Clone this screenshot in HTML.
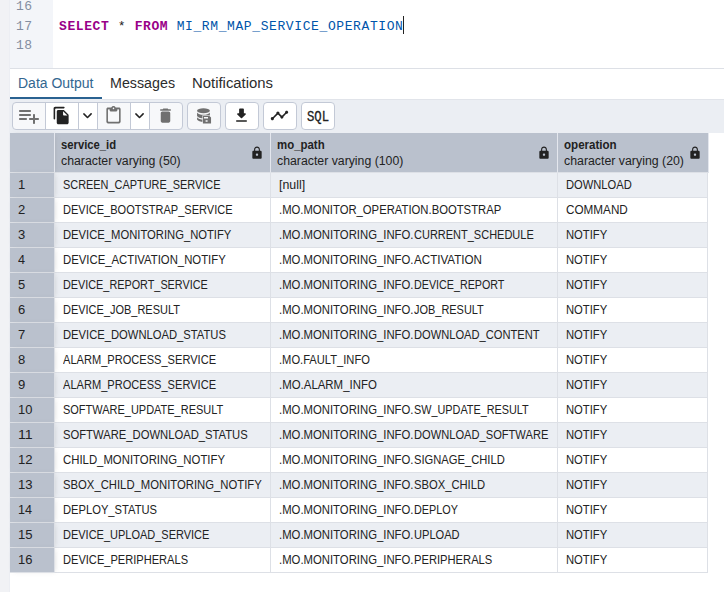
<!DOCTYPE html>
<html lang="en"><head><meta charset="utf-8"><title>Query</title>
<style>
*{box-sizing:border-box;margin:0;padding:0}
html,body{width:724px;height:592px;overflow:hidden;background:#fff}
body{position:relative;font-family:"Liberation Sans",sans-serif;color:#222;font-size:12px}
.abs{position:absolute}
.leftstrip{position:absolute;left:0;top:0;width:10px;height:592px;background:#f1f2f5;border-right:1px solid #eceef3}
.editor{position:absolute;left:10px;top:0;width:714px;height:68px;background:#fff}
.gutter{position:absolute;left:0;top:0;width:43px;height:68px;background:#f3f5f9}
.ln{position:absolute;left:0;width:43px;height:20px;font-family:"Liberation Mono",monospace;font-size:13px;letter-spacing:.6px;line-height:20px;color:#848ea0;padding-left:5.9px;white-space:pre}
.code{position:absolute;left:49px;top:16.6px;height:20px;font-family:"Liberation Mono",monospace;font-size:13px;letter-spacing:.6px;line-height:20px;white-space:pre;color:#222}
.kw{color:#990088;font-weight:bold}
.id{color:#0055aa}
.cursor{position:absolute;left:393px;top:16px;width:1px;height:18px;background:#222}
.edborder{position:absolute;left:10px;top:68px;width:714px;height:1px;background:#dde0e6}
.tabs{position:absolute;left:10px;top:69px;width:714px;height:30px;background:#fff}
.tab{position:absolute;top:0;height:30px;font-size:14px;line-height:16px;padding-top:5.5px;margin-left:-1px;white-space:nowrap;color:#2c2c2c}
.tab.active{color:#326690}
.tabline{position:absolute;left:0;top:28px;width:92px;height:2px;background:#2a6291}
.tbar{position:absolute;left:10px;top:99px;width:714px;height:34px;background:#ebeef3}
.tbline{position:absolute;left:102px;top:99px;width:622px;height:1px;background:#e1e4ea}
.btn{position:absolute;top:102px;height:28px;border:1px solid #c3c9d6;background:#fff}
.btn .ic{top:3px;width:19px;height:19px;left:50%;margin-left:-10px}
.sql{position:absolute;left:5.2px;top:5.5px;-webkit-text-stroke:.3px #222;font-family:"Liberation Mono",monospace;font-size:14px;line-height:16px;color:#222}
.btn.dis{background:#f7f8fa}
.btn svg{position:absolute;fill:#222}
.btn.dis svg{fill:#707070}
.grid{position:absolute;left:10px;top:133px;width:698px}
.hrow{height:40px;display:flex}
.hc{position:relative;height:40px;background:#bac1cd;border-right:1px solid #e4e7ee;border-bottom:1px solid #dde0e6;white-space:nowrap;overflow:hidden}
.c0{width:45px}.c1{width:216px}.c2{width:287px}.c3{width:150px}.hc.last{width:151px}
.grid{width:699px}
.hn{position:absolute;left:6px;top:4px;font-weight:bold;font-size:12px;line-height:16px}
.ht{position:absolute;left:6px;top:19.5px;font-size:12px;line-height:16px}
.lock{position:absolute;right:6px;top:13px;width:14px;height:14px;fill:#222}
.row{height:25px;display:flex}
.c{height:25px;border-right:1px solid #dde0e6;border-bottom:1px solid #dde0e6;padding-left:8px;font-size:12px;line-height:16px;padding-top:3.75px;white-space:nowrap;overflow:hidden}
.odd .c{background:#ebeef3}
.even .c{background:#fff}
.row .c.c0{background:#bac1cd}
span{display:inline-block;transform-origin:0 50%}

.pfx{width:134.5px;vertical-align:top}
.c0{position:relative;z-index:1;box-shadow:2px 0 5px -2px rgba(136,136,136,.3)}

</style></head>
<body>
<div class="leftstrip"></div>
<div class="editor">
 <div class="gutter">
  <div class="ln" style="top:-3px">16</div>
  <div class="ln" style="top:16.5px">17</div>
  <div class="ln" style="top:36px">18</div>
 </div>
 <div class="code"><span class="kw">SELECT</span> * <span class="kw">FROM</span> <span class="id">MI_RM_MAP_SERVICE_OPERATION</span></div>
 <div class="cursor"></div>
</div>
<div class="edborder"></div>
<div class="tabs">
 <div class="tab active" style="left:8.5px"><span style="transform:scaleX(0.9993)">Data Output</span></div>
 <div class="tab" style="left:101px"><span style="transform:scaleX(1.0189)">Messages</span></div>
 <div class="tab" style="left:182.5px"><span style="transform:scaleX(1.0630)">Notifications</span></div>
 <div class="tabline"></div>
</div>
<div class="tbar"></div><div class="tbline"></div>
<div class="btn dis" style="left:12px;width:34px;border-radius:4px 0 0 4px">
 <svg viewBox="0 0 24 24" style="left:4px;top:1px;width:24px;height:24px"><path d="M13 10H3c-.55 0-1 .45-1 1s.45 1 1 1h10c.55 0 1-.45 1-1s-.45-1-1-1zm0-4H3c-.55 0-1 .45-1 1s.45 1 1 1h10c.55 0 1-.45 1-1s-.45-1-1-1zm5 8v-3c0-.55-.45-1-1-1s-1 .45-1 1v3h-3c-.55 0-1 .45-1 1s.45 1 1 1h3v3c0 .55.45 1 1 1s1-.45 1-1v-3h3c.55 0 1-.45 1-1s-.45-1-1-1h-3zM3 16h6c.55 0 1-.45 1-1s-.45-1-1-1H3c-.55 0-1 .45-1 1s.45 1 1 1z"/></svg>
</div>
<div class="btn" style="left:45px;width:34px">
 <svg class="ic" viewBox="0 0 24 24"><path d="M15 1H4c-1.1 0-2 .9-2 2v13c0 .55.45 1 1 1s1-.45 1-1V4c0-.55.45-1 1-1h10c.55 0 1-.45 1-1s-.45-1-1-1zm.59 4.590l4.830 4.830c.37.37.58.88.58 1.410V21c0 1.100-.9 2-2 2H7.990C6.890 23 6 22.100 6 21l.010-14c0-1.100.890-2 1.990-2h6.170c.530 0 1.040.210 1.420.590zM15 12h4.500L14 6.500V11c0 .550.450 1 1 1z"/></svg>
</div>
<div class="btn" style="left:78px;width:20px">
 <svg class="ic" viewBox="0 0 24 24"><path d="M8.120 9.290L12 13.170l3.880-3.880c.39-.39 1.020-.39 1.410 0 .39.39.39 1.020 0 1.410l-4.590 4.590c-.39.39-1.020.39-1.410 0L6.700 10.700c-.39-.39-.39-1.020 0-1.410.39-.38 1.030-.39 1.420 0z"/></svg>
</div>
<div class="btn dis" style="left:97px;width:34px">
 <svg class="ic" viewBox="0 0 24 24"><path d="M19 2h-4.180C14.400.840 13.300 0 12 0S9.600.840 9.180 2H5c-1.100 0-2 .900-2 2v16c0 1.100.900 2 2 2h14c1.100 0 2-.900 2-2V4c0-1.100-.900-2-2-2zm-7 0c.550 0 1 .450 1 1s-.450 1-1 1-1-.450-1-1 .450-1 1-1zm6 18H6c-.550 0-1-.450-1-1V5c0-.550.450-1 1-1h1v1c0 1.100.900 2 2 2h6c1.100 0 2-.900 2-2V4h1c.550 0 1 .450 1 1v14c0 .550-.450 1-1 1z"/></svg>
</div>
<div class="btn" style="left:130px;width:20px">
 <svg class="ic" viewBox="0 0 24 24"><path d="M8.120 9.290L12 13.170l3.880-3.880c.39-.39 1.020-.39 1.410 0 .39.39.39 1.020 0 1.410l-4.590 4.590c-.39.39-1.020.39-1.410 0L6.700 10.700c-.39-.39-.39-1.020 0-1.410.39-.38 1.030-.39 1.420 0z"/></svg>
</div>
<div class="btn dis" style="left:149px;width:34px;border-radius:0 4px 4px 0">
 <svg class="ic" viewBox="0 0 24 24"><path d="M6 19c0 1.100.9 2 2 2h8c1.100 0 2-.9 2-2V9c0-1.100-.9-2-2-2H8c-1.100 0-2 .9-2 2v10zM18 4h-2.500l-.710-.710c-.180-.180-.440-.290-.700-.290H9.910c-.260 0-.520.110-.700.290L8.500 4H6c-.550 0-1 .450-1 1s.450 1 1 1h12c.550 0 1-.450 1-1s-.450-1-1-1z"/></svg>
</div>
<div class="btn dis" style="left:187px;width:34px;border-radius:4px">
 <svg viewBox="0 0 34 28" style="left:-1px;top:-1px;width:34px;height:28px">
  <ellipse cx="16.45" cy="8.7" rx="6.4" ry="2.45"/>
  <path d="M10.050 10.400C10.900 12 13.600 12.700 16.450 12.700S22 12 22.850 10.400V14C22 15.600 19.300 16.300 16.450 16.300S10.900 15.600 10.050 14z"/>
  <path d="M10.050 15.200C10.900 16.800 13.600 17.500 16.450 17.500S22 16.800 22.850 15.200V17.600C22 19.300 19.300 20 16.450 20S10.900 19.300 10.050 17.600z"/>
  <path d="M15.400 13.250h7l2.150 2.100v6.600h-9.150z" fill="#f7f8fa"/>
  <path d="M15.900 13.750h6.300l1.850 1.800v5.900h-8.150zM16.950 15v1.600h4.050v-1.600zM18.600 18.200v1.600h2v-1.600z" fill-rule="evenodd"/>
 </svg>
</div>
<div class="btn" style="left:225px;width:34px;border-radius:4px">
 <svg class="ic" style="margin-left:-9.6px" viewBox="0 0 24 24"><path d="M16.590 9H15V4c0-.550-.450-1-1-1h-4c-.550 0-1 .450-1 1v5H7.410c-.890 0-1.340 1.080-.710 1.710l4.590 4.590c.390.390 1.020.390 1.410 0l4.590-4.590c.630-.630.190-1.710-.700-1.710zM5 19c0 .550.450 1 1 1h12c.550 0 1-.450 1-1s-.450-1-1-1H6c-.550 0-1 .450-1 1z"/></svg>
</div>
<div class="btn" style="left:263px;width:34px;border-radius:4px">
 <svg class="ic" style="margin-left:-9.6px" viewBox="0 0 24 24"><path d="M23 8c0 1.100-.9 2-2 2-.180 0-.350-.020-.510-.070l-3.560 3.550c.050.160.070.340.070.520 0 1.100-.9 2-2 2s-2-.9-2-2c0-.180.020-.360.070-.520l-2.550-2.550c-.160.050-.340.070-.520.070s-.360-.020-.520-.070l-4.550 4.560c.050.160.070.330.070.510 0 1.100-.9 2-2 2s-2-.9-2-2 .9-2 2-2c.180 0 .350.020.510.070l4.560-4.550C8.020 9.360 8 9.180 8 9c0-1.100.9-2 2-2s2 .9 2 2c0 .180-.020.360-.070.520l2.550 2.550c.160-.050.340-.070.520-.070s.360.020.520.070l3.550-3.560C19.020 8.350 19 8.180 19 8c0-1.100.9-2 2-2s2 .9 2 2z"/></svg>
</div>
<div class="btn" style="left:301px;width:34px;border-radius:4px">
 <div class="sql"><span style="transform:scaleX(0.8763)">SQL</span></div>
</div>
<div class="grid">
<div class="hrow"><div class="hc c0"></div><div class="hc c1"><div class="hn"><span style="transform:scaleX(0.9380)">service_id</span></div><div class="ht"><span style="transform:scaleX(1.0255)">character varying (50)</span></div><svg class="lock" viewBox="0 0 24 24"><path d="M18 8h-1V6c0-2.760-2.240-5-5-5S7 3.240 7 6v2H6c-1.100 0-2 .9-2 2v10c0 1.100.9 2 2 2h12c1.100 0 2-.9 2-2V10c0-1.100-.9-2-2-2zm-6 9c-1.100 0-2-.9-2-2s.9-2 2-2 2 .9 2 2-.9 2-2 2zm3.100-9H8.900V6c0-1.710 1.390-3.100 3.100-3.100 1.710 0 3.100 1.390 3.100 3.100v2z"/></svg></div><div class="hc c2"><div class="hn"><span style="transform:scaleX(0.9532)">mo_path</span></div><div class="ht"><span style="transform:scaleX(1.0243)">character varying (100)</span></div><svg class="lock" viewBox="0 0 24 24"><path d="M18 8h-1V6c0-2.760-2.240-5-5-5S7 3.240 7 6v2H6c-1.100 0-2 .9-2 2v10c0 1.100.9 2 2 2h12c1.100 0 2-.9 2-2V10c0-1.100-.9-2-2-2zm-6 9c-1.100 0-2-.9-2-2s.9-2 2-2 2 .9 2 2-.9 2-2 2zm3.100-9H8.900V6c0-1.710 1.390-3.100 3.100-3.100 1.710 0 3.100 1.390 3.100 3.100v2z"/></svg></div><div class="hc c3 last"><div class="hn"><span style="transform:scaleX(0.9636)">operation</span></div><div class="ht"><span style="transform:scaleX(1.0279)">character varying (20)</span></div><svg class="lock" viewBox="0 0 24 24"><path d="M18 8h-1V6c0-2.760-2.240-5-5-5S7 3.240 7 6v2H6c-1.100 0-2 .9-2 2v10c0 1.100.9 2 2 2h12c1.100 0 2-.9 2-2V10c0-1.100-.9-2-2-2zm-6 9c-1.100 0-2-.9-2-2s.9-2 2-2 2 .9 2 2-.9 2-2 2zm3.100-9H8.900V6c0-1.710 1.390-3.100 3.100-3.100 1.710 0 3.100 1.390 3.100 3.100v2z"/></svg></div></div>
<div class="row odd"><div class="c c0"><span style="transform:scaleX(1.0861)">1</span></div><div class="c c1"><span style="transform:scaleX(0.9094)">SCREEN_CAPTURE_SERVICE</span></div><div class="c c2"><span style="transform:scaleX(1.0300)">[null]</span></div><div class="c c3"><span style="transform:scaleX(0.9297)">DOWNLOAD</span></div></div>
<div class="row even"><div class="c c0"><span style="transform:scaleX(1.0883)">2</span></div><div class="c c1"><span style="transform:scaleX(0.9191)">DEVICE_BOOTSTRAP_SERVICE</span></div><div class="c c2"><span style="transform:scaleX(0.9408)">.MO.MONITOR_OPERATION.BOOTSTRAP</span></div><div class="c c3"><span style="transform:scaleX(0.9758)">COMMAND</span></div></div>
<div class="row odd"><div class="c c0"><span style="transform:scaleX(1.0861)">3</span></div><div class="c c1"><span style="transform:scaleX(0.9363)">DEVICE_MONITORING_NOTIFY</span></div><div class="c c2"><span class="pfx"><span style="transform:scaleX(0.9442)">.MO.MONITORING_INFO.</span></span><span style="transform:scaleX(0.9161)">CURRENT_SCHEDULE</span></div><div class="c c3"><span style="transform:scaleX(0.9371)">NOTIFY</span></div></div>
<div class="row even"><div class="c c0"><span style="transform:scaleX(1.0505)">4</span></div><div class="c c1"><span style="transform:scaleX(0.9446)">DEVICE_ACTIVATION_NOTIFY</span></div><div class="c c2"><span class="pfx"><span style="transform:scaleX(0.9440)">.MO.MONITORING_INFO.</span></span><span style="transform:scaleX(0.9674)">ACTIVATION</span></div><div class="c c3"><span style="transform:scaleX(0.9372)">NOTIFY</span></div></div>
<div class="row odd"><div class="c c0"><span style="transform:scaleX(1.0784)">5</span></div><div class="c c1"><span style="transform:scaleX(0.9032)">DEVICE_REPORT_SERVICE</span></div><div class="c c2"><span class="pfx"><span style="transform:scaleX(0.9442)">.MO.MONITORING_INFO.</span></span><span style="transform:scaleX(0.8937)">DEVICE_REPORT</span></div><div class="c c3"><span style="transform:scaleX(0.9371)">NOTIFY</span></div></div>
<div class="row even"><div class="c c0"><span style="transform:scaleX(1.0842)">6</span></div><div class="c c1"><span style="transform:scaleX(0.9149)">DEVICE_JOB_RESULT</span></div><div class="c c2"><span class="pfx"><span style="transform:scaleX(0.9440)">.MO.MONITORING_INFO.</span></span><span style="transform:scaleX(0.9129)">JOB_RESULT</span></div><div class="c c3"><span style="transform:scaleX(0.9372)">NOTIFY</span></div></div>
<div class="row odd"><div class="c c0"><span style="transform:scaleX(1.0883)">7</span></div><div class="c c1"><span style="transform:scaleX(0.9346)">DEVICE_DOWNLOAD_STATUS</span></div><div class="c c2"><span class="pfx"><span style="transform:scaleX(0.9442)">.MO.MONITORING_INFO.</span></span><span style="transform:scaleX(0.9281)">DOWNLOAD_CONTENT</span></div><div class="c c3"><span style="transform:scaleX(0.9371)">NOTIFY</span></div></div>
<div class="row even"><div class="c c0"><span style="transform:scaleX(1.0877)">8</span></div><div class="c c1"><span style="transform:scaleX(0.9227)">ALARM_PROCESS_SERVICE</span></div><div class="c c2"><span style="transform:scaleX(0.9295)">.MO.FAULT_INFO</span></div><div class="c c3"><span style="transform:scaleX(0.9372)">NOTIFY</span></div></div>
<div class="row odd"><div class="c c0"><span style="transform:scaleX(1.0903)">9</span></div><div class="c c1"><span style="transform:scaleX(0.9228)">ALARM_PROCESS_SERVICE</span></div><div class="c c2"><span style="transform:scaleX(0.9525)">.MO.ALARM_INFO</span></div><div class="c c3"><span style="transform:scaleX(0.9371)">NOTIFY</span></div></div>
<div class="row even"><div class="c c0"><span style="transform:scaleX(1.0760)">10</span></div><div class="c c1"><span style="transform:scaleX(0.9148)">SOFTWARE_UPDATE_RESULT</span></div><div class="c c2"><span class="pfx"><span style="transform:scaleX(0.9440)">.MO.MONITORING_INFO.</span></span><span style="transform:scaleX(0.9039)">SW_UPDATE_RESULT</span></div><div class="c c3"><span style="transform:scaleX(0.9372)">NOTIFY</span></div></div>
<div class="row odd"><div class="c c0"><span style="transform:scaleX(1.1764)">11</span></div><div class="c c1"><span style="transform:scaleX(0.9372)">SOFTWARE_DOWNLOAD_STATUS</span></div><div class="c c2"><span class="pfx"><span style="transform:scaleX(0.9442)">.MO.MONITORING_INFO.</span></span><span style="transform:scaleX(0.9271)">DOWNLOAD_SOFTWARE</span></div><div class="c c3"><span style="transform:scaleX(0.9371)">NOTIFY</span></div></div>
<div class="row even"><div class="c c0"><span style="transform:scaleX(1.0922)">12</span></div><div class="c c1"><span style="transform:scaleX(0.9467)">CHILD_MONITORING_NOTIFY</span></div><div class="c c2"><span class="pfx"><span style="transform:scaleX(0.9440)">.MO.MONITORING_INFO.</span></span><span style="transform:scaleX(0.9316)">SIGNAGE_CHILD</span></div><div class="c c3"><span style="transform:scaleX(0.9372)">NOTIFY</span></div></div>
<div class="row odd"><div class="c c0"><span style="transform:scaleX(1.0940)">13</span></div><div class="c c1"><span style="transform:scaleX(0.9412)">SBOX_CHILD_MONITORING_NOTIFY</span></div><div class="c c2"><span class="pfx"><span style="transform:scaleX(0.9442)">.MO.MONITORING_INFO.</span></span><span style="transform:scaleX(0.9341)">SBOX_CHILD</span></div><div class="c c3"><span style="transform:scaleX(0.9371)">NOTIFY</span></div></div>
<div class="row even"><div class="c c0"><span style="transform:scaleX(1.0497)">14</span></div><div class="c c1"><span style="transform:scaleX(0.9317)">DEPLOY_STATUS</span></div><div class="c c2"><span class="pfx"><span style="transform:scaleX(0.9440)">.MO.MONITORING_INFO.</span></span><span style="transform:scaleX(0.9025)">DEPLOY</span></div><div class="c c3"><span style="transform:scaleX(0.9372)">NOTIFY</span></div></div>
<div class="row odd"><div class="c c0"><span style="transform:scaleX(1.0941)">15</span></div><div class="c c1"><span style="transform:scaleX(0.9157)">DEVICE_UPLOAD_SERVICE</span></div><div class="c c2"><span class="pfx"><span style="transform:scaleX(0.9442)">.MO.MONITORING_INFO.</span></span><span style="transform:scaleX(0.9237)">UPLOAD</span></div><div class="c c3"><span style="transform:scaleX(0.9371)">NOTIFY</span></div></div>
<div class="row even"><div class="c c0"><span style="transform:scaleX(1.0815)">16</span></div><div class="c c1"><span style="transform:scaleX(0.9238)">DEVICE_PERIPHERALS</span></div><div class="c c2"><span class="pfx"><span style="transform:scaleX(0.9440)">.MO.MONITORING_INFO.</span></span><span style="transform:scaleX(0.9312)">PERIPHERALS</span></div><div class="c c3"><span style="transform:scaleX(0.9372)">NOTIFY</span></div></div>
</div>
</body></html>
